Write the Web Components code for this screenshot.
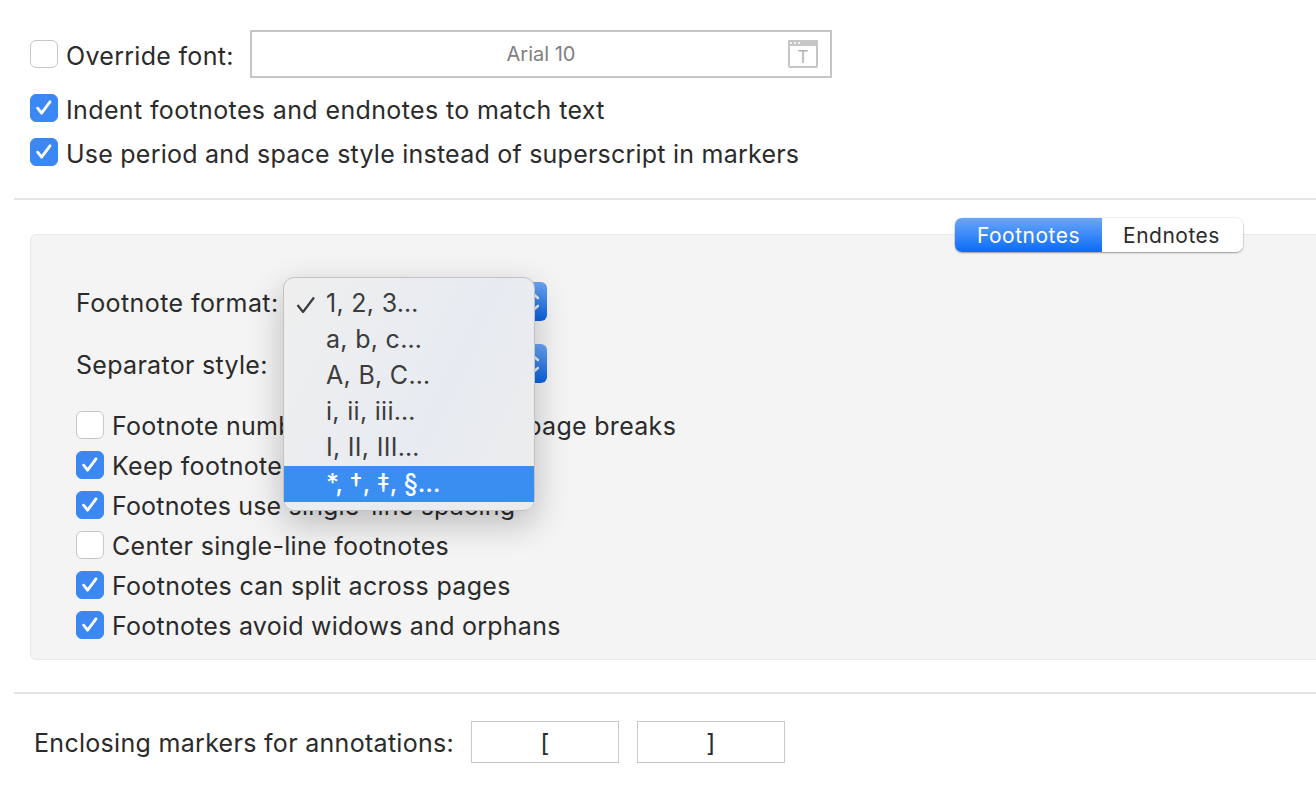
<!DOCTYPE html>
<html>
<head>
<meta charset="utf-8">
<style>
html, body { margin: 0; padding: 0; background: #fff; overflow: hidden; }
body { width: 1316px; height: 800px; font-family: Inter, "Liberation Sans", sans-serif; font-size: 25px; letter-spacing: .3px; color: #2b2b2b; }
</style>
</head>
<body>
<prefs-page>
  <section slot="top" class="top">
    <font-row>Override font:</font-row>
    <check-row checked style="letter-spacing:.37px;--nudge:2px">Indent footnotes and endnotes to match text</check-row>
    <check-row checked style="letter-spacing:.23px;--nudge:2px">Use period and space style instead of superscript in markers</check-row>
  </section>
  <notes-panel slot="panel">
    <seg-control slot="tabs"></seg-control>
    <popup-menu slot="menu"></popup-menu>
    <select-row slot="selects" label="Footnote format:" style="letter-spacing:.42px"></select-row>
    <select-row slot="selects" label="Separator style:"></select-row>
    <check-row>Footnote numbering restarts after page breaks</check-row>
    <check-row checked>Keep footnotes with text</check-row>
    <check-row checked style="letter-spacing:.18px">Footnotes use single-line spacing</check-row>
    <check-row>Center single-line footnotes</check-row>
    <check-row checked>Footnotes can split across pages</check-row>
    <check-row checked style="letter-spacing:.25px">Footnotes avoid widows and orphans</check-row>
  </notes-panel>
  <marker-row slot="bottom"></marker-row>
</prefs-page>

<script>
(function(){

function define(name, html, init) {
    var template = document.createElement('template');
    template.innerHTML = html;
    customElements.define(name, class extends HTMLElement {
        constructor() {
            super();
            this.attachShadow({mode:'open'});
            this.shadowRoot.appendChild(template.content.cloneNode(true));
        }
        connectedCallback() {
            if (init) init(this, this.shadowRoot);
        }
    });
}

define('prefs-page', /*html*/`
<style>
    :host { display: block; width: 1316px; height: 800px; overflow: hidden; }
    .top { height: 198px; padding: 30px 0 0 30px; box-sizing: border-box; }
    hr { height: 2px; margin: 0 0 0 14px; border: 0; background: #e6e6e6; }
    .mid { padding: 34px 0 32px 30px; }
    .bottom { padding: 27px 0 0 34px; }
    ::slotted(.top) { display: flex; flex-direction: column; gap: 16px; }
</style>
<div class="top"><slot name="top"></slot></div>
<hr>
<div class="mid"><slot name="panel"></slot></div>
<hr>
<div class="bottom"><slot name="bottom"></slot></div>
`);

define('check-row', /*html*/`
<style>
    :host { display: flex; align-items: center; gap: 8px; height: 28px; white-space: nowrap; }
    .box { flex: none; width: 28px; height: 28px; box-sizing: border-box; border-radius: 6px; background: #fff; border: 1px solid #c6c6c6; }
    :host([checked]) .box { background: #3b88f5; border-color: #3b88f5; }
    svg { display: none; width: 28px; height: 28px; margin: -1px; }
    :host([checked]) svg { display: block; }
    .txt { position: relative; top: var(--nudge, 1px); }
</style>
<div class="box"><svg viewBox="0 0 28 28" fill="none"><path d="M7.6 14.2l4 5L20 7.8" stroke="#fff" stroke-width="2.8" stroke-linecap="round" stroke-linejoin="round"/></svg></div>
<span class="txt"><slot></slot></span>
`);

define('font-row', /*html*/`
<style>
    :host { display: flex; align-items: center; height: 48px; white-space: nowrap; }
    .box { flex: none; width: 28px; height: 28px; box-sizing: border-box; border-radius: 6px; background: #fff; border: 1px solid #c6c6c6; margin-right: 8px; }
    .label { width: 184px; flex: none; position: relative; top: 2px; }
    .field { flex: none; display: flex; align-items: center; justify-content: center; position: relative; width: 582px; height: 48px; box-sizing: border-box; border: 2px solid #c6c6c6; background: #fff; color: #808080; font-size: 20px; letter-spacing: 0; }
    svg { position: absolute; right: 12px; top: 8px; }
    svg text { font: 400 17px Inter, sans-serif; fill: #b5b5b5; }
</style>
<div class="box"></div>
<span class="label"><slot></slot></span>
<div class="field">Arial 10
  <svg width="30" height="28" viewBox="0 0 30 28">
    <rect x="1" y="1" width="28" height="26" rx="1" fill="#fff" stroke="#c6c6c6" stroke-width="2"/>
    <rect x="0" y="0" width="30" height="6" rx="1" fill="#c6c6c6"/>
    <circle cx="3" cy="3" r="1" fill="#fff"/><circle cx="7" cy="3" r="1" fill="#fff"/><circle cx="11" cy="3" r="1" fill="#fff"/>
    <text x="15" y="23" text-anchor="middle">T</text>
  </svg>
</div>
`);

define('notes-panel', /*html*/`
<style>
    :host { display: block; position: relative; box-sizing: border-box; width: 1300px; height: 426px; padding: 47px 0 0 45px; background: #f4f4f4; border: 1px solid #e9e9e9; border-radius: 6px; }
    .selects { display: flex; flex-direction: column; gap: 23px; margin-bottom: 28px; }
    .checks { display: flex; flex-direction: column; gap: 12px; }
</style>
<slot name="tabs"></slot>
<slot name="menu"></slot>
<div class="selects"><slot name="selects"></slot></div>
<div class="checks"><slot></slot></div>
`);

define('select-row', /*html*/`
<style>
    :host { display: flex; align-items: center; height: 39px; white-space: nowrap; }
    .label { width: 208px; flex: none; position: relative; top: 1px; }
    .select { width: 263px; height: 39px; border-radius: 6px; background: #fff; position: relative; overflow: hidden; }
    .step { position: absolute; right: 0; top: 0; bottom: 0; width: 30px; background: linear-gradient(#6aa5f3, #0a62e2); display: flex; align-items: center; justify-content: center; }
</style>
<div class="label"></div>
<div class="select"><div class="step">
  <svg width="14" height="24" viewBox="0 0 14 24" fill="none"><path d="M1 8l6-5 6 5M1 16l6 5 6-5" stroke="#e6eefc" stroke-width="2.6" stroke-linecap="round" stroke-linejoin="round"/></svg>
</div></div>
`, function(el, root) {
    root.querySelector('.label').textContent = el.getAttribute('label');
});

define('popup-menu', /*html*/`
<style>
    :host { display: block; position: absolute; left: 252px; top: 42px; width: 252px; box-sizing: border-box; padding: 8px 0 8px; z-index: 5; border-radius: 11px; border: 1px solid #c2c2c2;
        background: linear-gradient(115deg, #efefef, #e7ebf1 60%, #ececec); box-shadow: 0 12px 34px rgba(0,0,0,.24); color: #3c3c3c; }
    div { position: relative; height: 36px; line-height: 35px; padding-left: 42px; white-space: nowrap; }
    svg { position: absolute; left: 12px; top: 10px; }
    .on { background: #3a8ef2; color: #fff; font-weight: 500; letter-spacing: 0; }
</style>
<div><svg width="20" height="18" viewBox="0 0 20 18" fill="none"><path d="M1.5 9l5.5 7L18 1.5" stroke="#3c3c3c" stroke-width="2.2" stroke-linejoin="round"/></svg>1, 2, 3…</div>
<div>a, b, c…</div>
<div>A, B, C…</div>
<div>i, ii, iii…</div>
<div>I, II, III…</div>
<div class="on">*, †, ‡, §…</div>
`);

define('seg-control', /*html*/`
<style>
    :host { display: flex; position: absolute; left: 924px; top: -17px; width: 288px; height: 34px; border-radius: 7px; font-size: 21px; letter-spacing: .5px; box-shadow: 0 1px 2px rgba(0,0,0,.35), 0 0 0 .5px rgba(0,0,0,.1); z-index: 2; }
    div { display: flex; align-items: center; justify-content: center; }
    .a { width: 147px; color: #fff; border-radius: 7px 0 0 7px; background: linear-gradient(#6ba6f8, #0a6cf7); }
    .b { flex: 1; background: #fff; border-radius: 0 7px 7px 0; color: #2b2b2b; padding-right: 2px; box-sizing: border-box; }
</style>
<div class="a">Footnotes</div><div class="b">Endnotes</div>
`);

define('marker-row', /*html*/`
<style>
    :host { display: flex; align-items: center; height: 42px; white-space: nowrap; }
    span { width: 437px; flex: none; position: relative; top: 1px; }
    div { width: 148px; height: 42px; box-sizing: border-box; border: 1px solid #c8c8c8; background: #fff; display: flex; align-items: center; justify-content: center; margin-right: 18px; padding-top: 2px; }
</style>
<span>Enclosing markers for annotations:</span><div>[</div><div>]</div>
`);

})();
</script>
</body>
</html>
